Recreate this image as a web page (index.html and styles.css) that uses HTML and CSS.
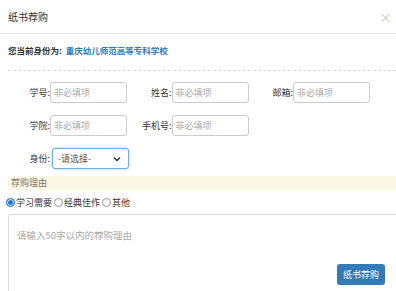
FILE: index.html
```html
<!DOCTYPE html>
<html lang="zh">
<head>
  <meta charset="utf-8">
  <title>纸书荐购</title>
  <link rel="stylesheet" href="styles.css">
</head>
<body>
  <div class="modal">
    <!-- 标题栏 -->
    <div class="modal-header">
      <span class="modal-title">纸书荐购</span>
      <span class="close">&times;</span>
    </div>

    <div class="modal-body">
      <div class="identity">
        <b>您当前身份为:</b>
        <a class="school">重庆幼儿师范高等专科学校</a>
      </div>

      <!-- 读者信息 -->
      <div class="fields">
        <div class="row">
          <div class="field"><label>学号:</label><input type="text" placeholder="非必填项"></div>
          <div class="field"><label>姓名:</label><input type="text" placeholder="非必填项"></div>
          <div class="field"><label>邮箱:</label><input type="text" placeholder="非必填项"></div>
        </div>
        <div class="row">
          <div class="field"><label>学院:</label><input type="text" placeholder="非必填项"></div>
          <div class="field"><label>手机号:</label><input type="text" placeholder="非必填项"></div>
        </div>
        <div class="row">
          <div class="field">
            <label>身份:</label>
            <div class="select-wrap">
              <select>
                <option>-请选择-</option>
                <option>学生</option>
                <option>教师</option>
              </select>
              <svg class="chevron" width="8" height="6" viewBox="0 0 8 6"><path d="M1 1.5 L4 4.5 L7 1.5" fill="none" stroke="#333" stroke-width="1.5"/></svg>
            </div>
          </div>
        </div>
      </div>

      <div class="reason-bar">荐购理由</div>

      <div class="radios">
        <label><input type="radio" name="reason" checked>学习需要</label>
        <label><input type="radio" name="reason">经典佳作</label>
        <label><input type="radio" name="reason">其他</label>
      </div>

      <div class="reason-box">
        <textarea placeholder="请输入50字以内的荐购理由"></textarea>
        <button class="btn-submit">纸书荐购</button>
      </div>
    </div>
  </div>
</body>
</html>
```

FILE: styles.css
```css
html, body {
  margin: 0;
  padding: 0;
  overflow: hidden;
  background: #fff;
}
body {
  font-family: "Noto Sans CJK SC", "Liberation Sans", sans-serif;
  font-size: 9px;
  color: #333;
}
.modal {
  width: 396px;
}
.modal-header {
  height: 34px;
  box-sizing: border-box;
  border-bottom: 1px solid #e5e5e5;
  padding: 0 4px 0 8px;
  display: flex;
  align-items: center;
  justify-content: space-between;
}
.modal-title {
  font-size: 10px;
  color: #333;
}
.close {
  font-size: 13px;
  color: #c8c8c8;
}
.modal-body {
  padding: 0 0 0 8px;
}
.identity {
  height: 37px;
  box-sizing: border-box;
  padding-top: 10px;
  line-height: 12px;
  font-size: 8.5px;
  border-bottom: 1px dashed #ddd;
}
.identity b {
  font-weight: bold;
  color: #333;
}
.school {
  color: #2f7bbf;
  font-weight: bold;
  margin-left: 2px;
}
.fields {
  padding-top: 11px;
}
.row {
  display: flex;
  height: 21px;
  margin-bottom: 12px;
}
.row:last-child {
  margin-bottom: 0;
}
.field {
  display: flex;
  align-items: center;
  width: 121.5px;
}
.field label {
  width: 42px;
  text-align: right;
  color: #333;
}
.field input {
  width: 77px;
  height: 21px;
  box-sizing: border-box;
  border: 1px solid #ccc;
  border-radius: 3px;
  padding: 0 3px;
  font: inherit;
  outline: none;
}
.field input::placeholder {
  color: #aaa;
}
.select-wrap {
  position: relative;
  margin-left: 2px;
}
.select-wrap select {
  -webkit-appearance: none;
  appearance: none;
  width: 77px;
  height: 21px;
  box-sizing: border-box;
  border: 1px solid #66afe9;
  border-radius: 3px;
  box-shadow: 0 0 3px rgba(102, 175, 233, 0.6);
  padding: 0 5px;
  font: inherit;
  color: #555;
  background: #fff;
  outline: none;
}
.chevron {
  position: absolute;
  right: 8px;
  top: 8px;
}
.reason-bar {
  margin-top: 7px;
  height: 14px;
  line-height: 14px;
  background: #fcf6e4;
  padding-left: 3px;
  color: #777;
}
.radios {
  display: flex;
  align-items: center;
  height: 24px;
  margin-left: -2px;
}
.radios label {
  display: flex;
  align-items: center;
  margin-right: 2px;
}
.radios input {
  -webkit-appearance: none;
  appearance: none;
  width: 9px;
  height: 9px;
  margin: 0 1px 0 0;
  border: 1px solid #999;
  border-radius: 50%;
  background: #fff;
}
.radios input:checked {
  border-color: #1a73e8;
  background: #1a73e8;
  box-shadow: inset 0 0 0 1px #fff;
}
.reason-box {
  position: relative;
  height: 90px;
}
.reason-box textarea {
  width: 100%;
  height: 90px;
  box-sizing: border-box;
  border: 1px solid #ddd;
  border-right: none;
  border-radius: 3px 0 0 3px;
  padding: 13px 8px;
  font: inherit;
  font-size: 9.5px;
  resize: none;
  outline: none;
  display: block;
}
.reason-box textarea::placeholder {
  color: #aaa;
}
.btn-submit {
  position: absolute;
  left: 329px;
  top: 50px;
  width: 48px;
  height: 21px;
  border: none;
  border-radius: 3px;
  background: #337ab7;
  color: #fff;
  font: inherit;
  font-size: 9px;
  padding: 0;
}
```
